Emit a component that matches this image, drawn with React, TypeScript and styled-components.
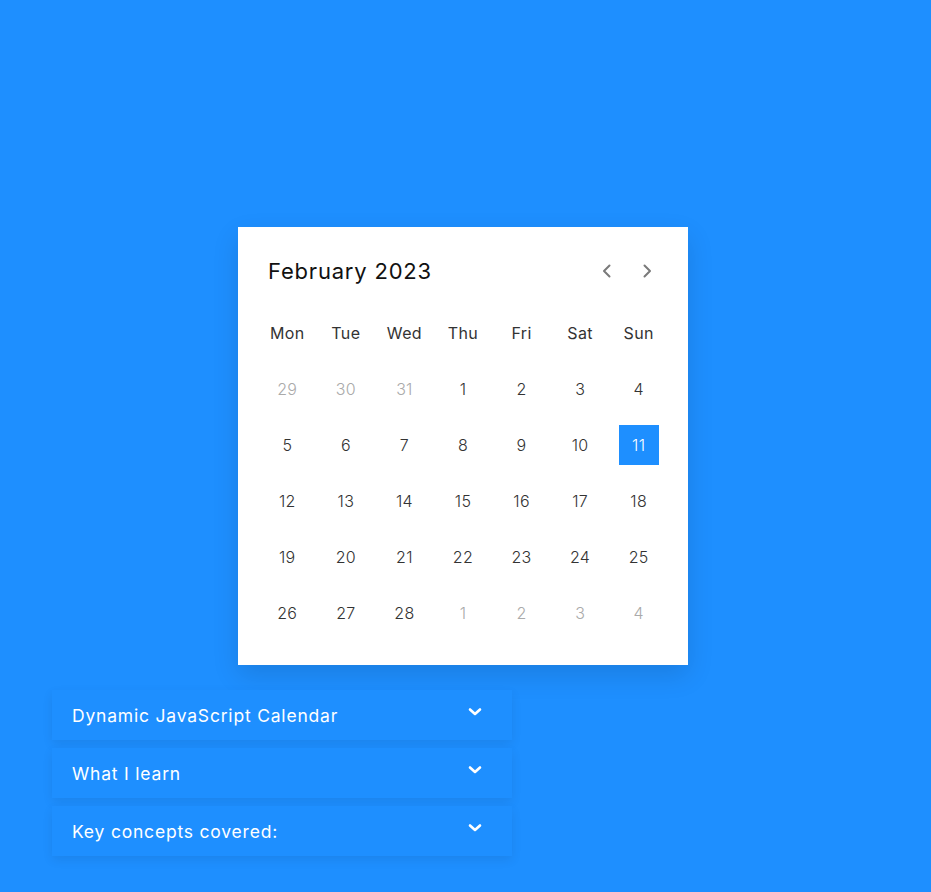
import React from 'react';
import styled, {createGlobalStyle} from 'styled-components';

const GlobalStyle = createGlobalStyle`
  * {
    box-sizing: border-box;
  }
  body {
    margin: 0;
    background: #1e8fff;
    font-family: "Inter", "Open Sans", sans-serif;
  }
`

type DayType = {
    value: number
    muted?: boolean
    active?: boolean
}

const weekDays = ['Mon', 'Tue', 'Wed', 'Thu', 'Fri', 'Sat', 'Sun']

const days: DayType[] = [
    {value: 29, muted: true}, {value: 30, muted: true}, {value: 31, muted: true},
    ...Array.from({length: 28}, (_, i) => ({value: i + 1, active: i + 1 === 11})),
    {value: 1, muted: true}, {value: 2, muted: true}, {value: 3, muted: true}, {value: 4, muted: true},
]

const sections = ['Dynamic JavaScript Calendar', 'What I learn', 'Key concepts covered:']

const Chevron = ({dir}: { dir: 'left' | 'right' }) => (
    <svg width="12" height="16" viewBox="0 0 12 16" fill="none">
        <path d={dir === 'left' ? 'M8.5 2.5 L3 8 L8.5 13.5' : 'M3.5 2.5 L9 8 L3.5 13.5'}
              stroke="#7a7a7a" strokeWidth="2" strokeLinecap="round" strokeLinejoin="round"/>
    </svg>
)

const ChevronDown = () => (
    <svg width="14" height="10" viewBox="0 0 14 10" fill="none">
        <path d="M2 2.5 L7 7 L12 2.5" stroke="#fff" strokeWidth="2.6" strokeLinecap="round" strokeLinejoin="round"/>
    </svg>
)

export default function App() {
    return (
        <Page>
            <GlobalStyle/>
            <Calendar>
                <Header>
                    <Title>February 2023</Title>
                    <Arrows>
                        <ArrowButton><Chevron dir="left"/></ArrowButton>
                        <ArrowButton><Chevron dir="right"/></ArrowButton>
                    </Arrows>
                </Header>
                <Grid>
                    {weekDays.map(d => <WeekDay key={d}>{d}</WeekDay>)}
                    {days.map((d, i) => (
                        <Day key={i} muted={d.muted} active={d.active}>{d.value}</Day>
                    ))}
                </Grid>
            </Calendar>
            <Accordion>
                {sections.map(s => (
                    <Item key={s}>
                        <ItemTitle>{s}</ItemTitle>
                        <ChevronDown/>
                    </Item>
                ))}
            </Accordion>
        </Page>
    );
};

const Page = styled.div`
  min-height: 892px;
  padding-top: 227px;
  padding-bottom: 36px;
`

const Calendar = styled.div`
  width: 450px;
  margin-left: 238px;
  background: #fff;
  padding: 30px 20px 32px;
  box-shadow: 0 10px 25px rgba(0, 0, 0, 0.12);
`

const Header = styled.div`
  display: flex;
  align-items: center;
  justify-content: space-between;
  height: 28px;
  padding: 0 10px 0 10px;
  margin-bottom: 28px;
`

const Title = styled.div`
  font-size: 22px;
  font-weight: 400;
  color: #111;
  letter-spacing: 0.8px;
`

const Arrows = styled.div`
  display: flex;
  gap: 28px;
  padding-right: 5px;
`

const ArrowButton = styled.div`
  display: flex;
  width: 12px;
  height: 16px;
`

const Grid = styled.div`
  display: grid;
  grid-template-columns: repeat(7, 1fr);
  grid-auto-rows: 40px;
  row-gap: 16px;
  justify-items: center;
`

const WeekDay = styled.div`
  display: flex;
  align-items: center;
  justify-content: center;
  font-size: 16px;
  font-weight: 400;
  letter-spacing: 0.4px;
  color: #333;
`

const Day = styled.div<{ muted?: boolean, active?: boolean }>`
  width: 40px;
  height: 40px;
  display: flex;
  align-items: center;
  justify-content: center;
  font-size: 16px;
  font-weight: 300;
  letter-spacing: 0.3px;
  color: ${p => p.active ? '#fff' : p.muted ? '#aaa' : '#333'};
  background: ${p => p.active ? '#1e8fff' : 'transparent'};
`

const Accordion = styled.div`
  width: 460px;
  margin: 25px 0 0 52px;
  display: flex;
  flex-direction: column;
  gap: 8px;
`

const Item = styled.div`
  height: 50px;
  display: flex;
  align-items: center;
  justify-content: space-between;
  padding: 0 30px 6px 20px;
  background: #1e8fff;
  box-shadow: 0 4px 10px rgba(0, 0, 0, 0.08);
`

const ItemTitle = styled.div`
  font-size: 17.5px;
  color: #fff;
  letter-spacing: 0.8px;
  padding-top: 6px;
`
